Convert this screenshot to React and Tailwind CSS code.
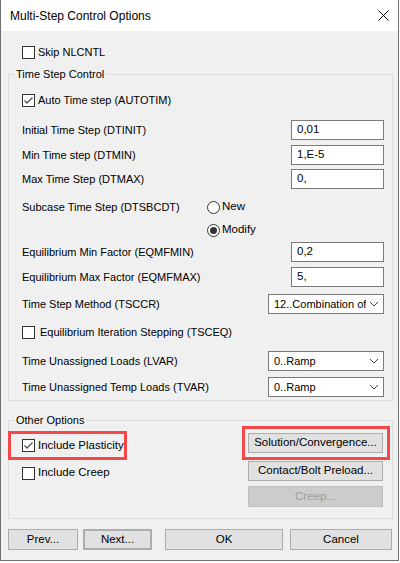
import React from 'react';

const font = { fontFamily: '"Liberation Sans", Arial, sans-serif' };

function CheckBox({ checked }) {
  return (
    <span className="flex h-[13px] w-[13px] shrink-0 items-center justify-center border border-[#333333] bg-white">
      {checked && (
        <svg width="11" height="11" viewBox="0 0 11 11">
          <path d="M1.5 5.5 L4 8 L9.5 2.5" fill="none" stroke="#555555" strokeWidth="1.4" />
        </svg>
      )}
    </span>
  );
}

function Radio({ checked }) {
  return (
    <span className="flex h-[13px] w-[13px] shrink-0 items-center justify-center rounded-full border border-[#333333] bg-white">
      {checked && <span className="h-[7px] w-[7px] rounded-full bg-[#333333]" />}
    </span>
  );
}

function TextField({ value }) {
  return (
    <div className="flex h-[20px] w-[93px] items-center border border-[#7a7a7a] bg-white pl-[5px] text-[11.5px] text-black">
      {value}
    </div>
  );
}

function Select({ value }) {
  return (
    <div className="flex h-[20px] w-[116px] items-center border border-[#7a7a7a] bg-white pl-[5px] pr-[4px] text-[11px] text-black">
      <span className="w-[92px] overflow-hidden whitespace-nowrap">{value}</span>
      <svg className="ml-auto" width="10" height="6" viewBox="0 0 10 6">
        <path d="M1 1 L5 5 L9 1" fill="none" stroke="#444444" strokeWidth="1" />
      </svg>
    </div>
  );
}

function FieldRow({ label, children, className = '' }) {
  return (
    <div className={`flex h-[20px] items-center pl-[13px] pr-[8px] ${className}`}>
      <span className="whitespace-nowrap text-[11px] text-black">{label}</span>
      <div className="ml-auto">{children}</div>
    </div>
  );
}

function Button({ children, className = '', disabled }) {
  return (
    <div
      className={`flex items-center justify-center whitespace-nowrap border text-[11.5px] ${
        disabled ? 'border-[#bfbfbf] bg-[#cccccc] text-[#9d9d9d]' : 'border-[#adadad] bg-[#e1e1e1] text-black'
      } ${className}`}
    >
      {children}
    </div>
  );
}

export default function App() {
  return (
    <div className="h-[563px] w-[400px] bg-white" style={font}>
      <div className="flex h-[561px] w-[399px] flex-col border-b border-l border-r border-[#6f6f6f] bg-[#f0f0f0]">
        {/* Title bar */}
        <div className="flex h-[31px] items-center bg-white pl-[9px] pr-[9px]">
          <span className="text-[12px] text-black">Multi-Step Control Options</span>
          <svg className="ml-auto" width="11" height="11" viewBox="0 0 11 11">
            <path d="M0.5 0.5 L10.5 10.5 M10.5 0.5 L0.5 10.5" stroke="#000" strokeWidth="1" />
          </svg>
        </div>

        {/* Skip */}
        <div className="mt-[11px] flex h-[20px] items-center gap-[3px] pl-[21px]">
          <CheckBox />
          <span className="text-[11px] text-black">Skip NLCNTL</span>
        </div>

        {/* Time Step Control */}
        <fieldset className="ml-[7px] mt-[6px] w-[385px] border border-[#dcdcdc] pb-[3px]">
          <legend className="ml-[5px] px-[2px] text-[11px] leading-[12px] text-black">Time Step Control</legend>

          <div className="mt-[10px] flex h-[20px] items-center gap-[3px] pl-[13px]">
            <CheckBox checked />
            <span className="text-[11px] text-black">Auto Time step (AUTOTIM)</span>
          </div>

          <FieldRow label="Initial Time Step (DTINIT)" className="mt-[10px]">
            <TextField value="0,01" />
          </FieldRow>
          <FieldRow label="Min Time step (DTMIN)" className="mt-[5px]">
            <TextField value="1,E-5" />
          </FieldRow>
          <FieldRow label="Max Time Step (DTMAX)" className="mt-[4px]">
            <TextField value="0," />
          </FieldRow>

          <div className="mt-[8px] flex pl-[13px]">
            <div className="flex h-[20px] w-[185px] items-center text-[11px] text-black">Subcase Time Step (DTSBCDT)</div>
            <div className="flex flex-col gap-[3px]">
              <div className="flex h-[20px] items-center gap-[2px]">
                <Radio />
                <span className="text-[11.5px] text-black">New</span>
              </div>
              <div className="flex h-[20px] items-center gap-[2px]">
                <Radio checked />
                <span className="text-[11.5px] text-black">Modify</span>
              </div>
            </div>
          </div>

          <FieldRow label="Equilibrium Min Factor (EQMFMIN)" className="mt-[2px]">
            <TextField value="0,2" />
          </FieldRow>
          <FieldRow label="Equilibrium Max Factor (EQMFMAX)" className="mt-[5px]">
            <TextField value="5," />
          </FieldRow>
          <FieldRow label="Time Step Method (TSCCR)" className="mt-[7px]">
            <Select value="12..Combination of Methods" />
          </FieldRow>

          <div className="mt-[8px] flex h-[20px] items-center gap-[5px] pl-[13px]">
            <CheckBox />
            <span className="text-[11px] text-black">Equilibrium Iteration Stepping (TSCEQ)</span>
          </div>

          <FieldRow label="Time Unassigned Loads (LVAR)" className="mt-[9px]">
            <Select value="0..Ramp" />
          </FieldRow>
          <FieldRow label="Time Unassigned Temp Loads (TVAR)" className="mt-[6px]">
            <Select value="0..Ramp" />
          </FieldRow>
        </fieldset>

        {/* Other Options */}
        <fieldset className="ml-[7px] mt-[13px] w-[385px] border border-[#dcdcdc] pb-[11px]">
          <legend className="ml-[5px] px-[2px] text-[11px] leading-[12px] text-black">Other Options</legend>
          <div className="flex">
            <div className="-ml-[1px] flex flex-col">
              <div className="mt-[5px] flex h-[29px] w-[119px] items-center gap-[3px] whitespace-nowrap border-[3px] border-[#f24848] pl-[11px]">
                <CheckBox checked />
                <span className="text-[11.5px] text-black">Include Plasticity</span>
              </div>
              <div className="mt-[3px] flex h-[20px] items-center gap-[3px] pl-[14px]">
                <CheckBox />
                <span className="text-[11.5px] text-black">Include Creep</span>
              </div>
            </div>
            <div className="ml-auto mr-[2px] flex flex-col items-end">
              <div className="flex h-[34px] w-[148px] items-center border-[3px] border-[#f24848] pl-[3px]">
                <Button className="h-[20px] w-[135px]">Solution/Convergence...</Button>
              </div>
              <Button className="mr-[7px] mt-[1px] h-[20px] w-[135px]">Contact/Bolt Preload...</Button>
              <Button disabled className="mr-[7px] mt-[5px] h-[21px] w-[135px]">Creep...</Button>
            </div>
          </div>
        </fieldset>

        {/* Bottom buttons */}
        <div className="mt-[10px] flex pl-[7px]">
          <Button className="h-[21px] w-[70px]">Prev...</Button>
          <Button className="ml-[5px] h-[21px] w-[69px] border-2 border-[#0078d7]">Next...</Button>
          <Button className="ml-[13px] h-[21px] w-[118px]">OK</Button>
          <Button className="ml-[7px] h-[21px] w-[102px]">Cancel</Button>
        </div>
      </div>
    </div>
  );
}
